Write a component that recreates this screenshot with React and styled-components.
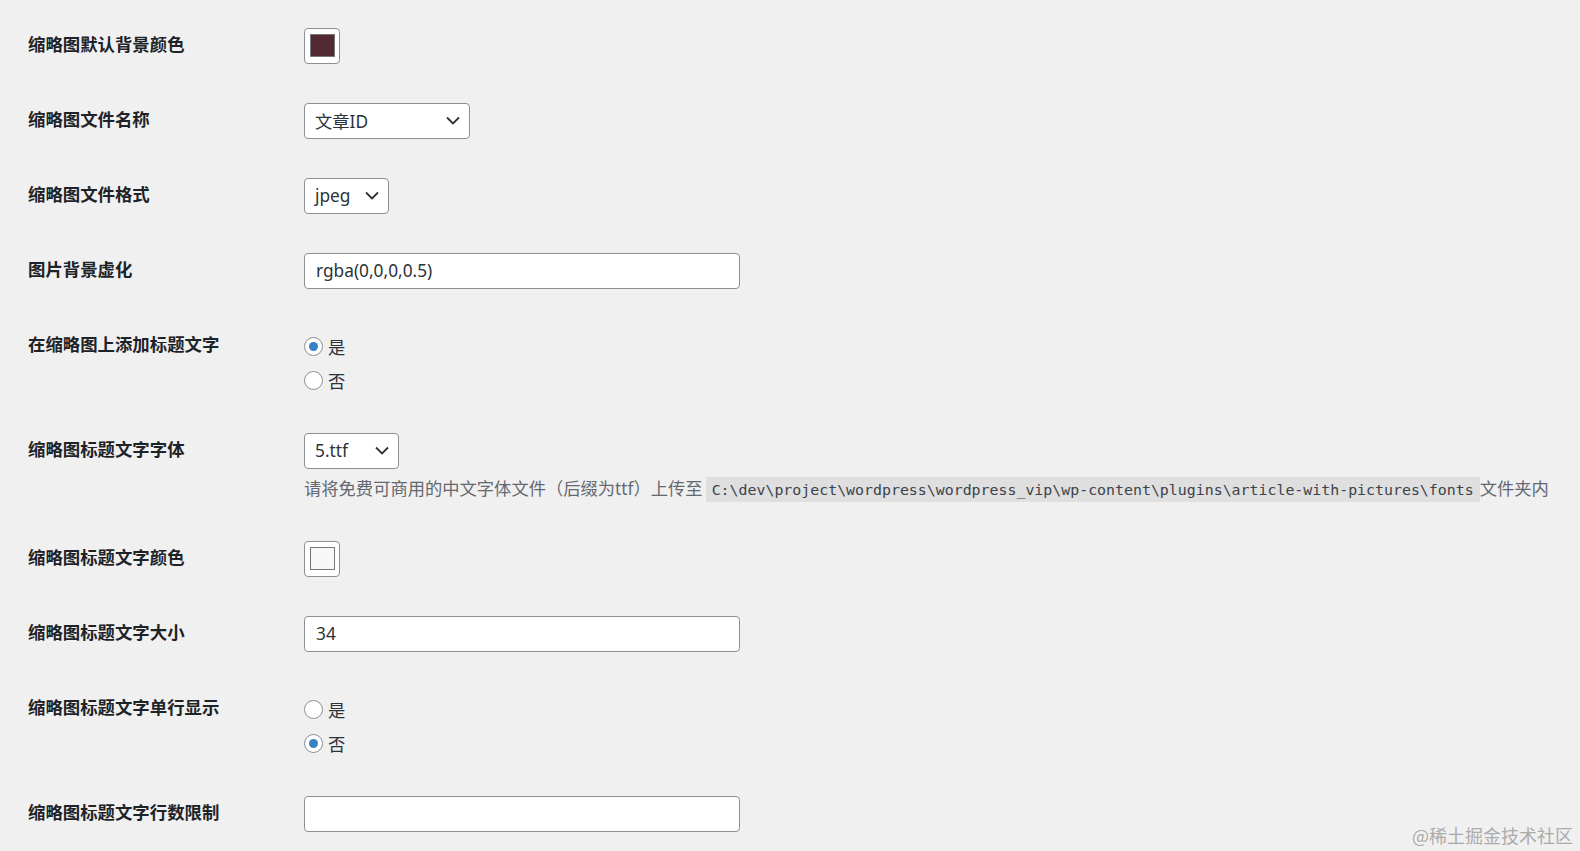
import React from "react";
import styled, { createGlobalStyle } from "styled-components";

const GlobalStyle = createGlobalStyle`
  html, body {
    margin: 0;
    padding: 0;
    background: #f0f0f1;
  }
  body {
    font-family: "Noto Sans", "Noto Sans CJK SC", sans-serif;
    color: #2c3338;
  }
`;

const Page = styled.div`
  position: relative;
  min-height: 100vh;
  box-sizing: border-box;
  padding: 8px 0 0 28px;
  font-size: 17.3px;
`;

const FormTable = styled.div`
  display: flex;
  flex-direction: column;
`;

const Row = styled.div`
  display: flex;
  align-items: flex-start;
`;

const Label = styled.div`
  width: 276px;
  flex-shrink: 0;
  padding-top: 25px;
  font-family: "Noto Sans CJK SC", sans-serif;
  font-weight: 700;
  font-size: 17.4px;
  line-height: 22px;
  color: #1d2327;
`;

const Field = styled.div`
  flex: 1;
  padding: 19.5px 0;
  display: flex;
  flex-direction: column;
  align-items: flex-start;
`;

const ColorButton = styled.div`
  width: 36px;
  height: 36px;
  box-sizing: border-box;
  border: 1px solid #8c8f94;
  border-radius: 4px;
  background: #fff;
  display: flex;
  align-items: center;
  justify-content: center;
`;

const Swatch = styled.div`
  width: 25px;
  height: 23px;
  box-sizing: border-box;
  border: 1px solid #777;
  background: ${(p) => p.color};
`;

const SelectBox = styled.div`
  width: ${(p) => p.width}px;
  height: 36px;
  box-sizing: border-box;
  border: 1px solid #8c8f94;
  border-radius: 4px;
  background: #fff;
  display: flex;
  align-items: center;
  justify-content: space-between;
  padding: 0 9px 0 10px;
  color: #2c3338;
  font-size: 17.3px;
`;

const SelectValue = styled.span`
  font-family: "Noto Sans", "Noto Sans CJK SC", sans-serif;
`;

const TextInput = styled.div`
  width: 436px;
  height: 36px;
  box-sizing: border-box;
  border: 1px solid #8c8f94;
  border-radius: 4px;
  background: #fff;
  display: flex;
  align-items: center;
  padding: 0 11px;
  font-size: 17.3px;
  color: #2c3338;
`;

const RadioList = styled.div`
  display: flex;
  flex-direction: column;
`;

const RadioOption = styled.label`
  display: flex;
  align-items: center;
  height: 22px;
  margin: 8px 0 4px;
  font-family: "Noto Sans CJK SC", sans-serif;
  font-size: 17.3px;
  color: #2c3338;
  &:last-child {
    margin-bottom: 2px;
  }
`;

const RadioCircle = styled.span`
  width: 19px;
  height: 19px;
  box-sizing: border-box;
  border-radius: 50%;
  border: 1px solid #8c8f94;
  background: #fff;
  margin: 0 5px 0 0;
  display: flex;
  align-items: center;
  justify-content: center;
  &::before {
    content: "";
    width: 9px;
    height: 9px;
    border-radius: 50%;
    background: ${(p) => (p.checked ? "#3582c4" : "transparent")};
  }
`;

const Description = styled.p`
  margin: 8px 0 0;
  line-height: 24px;
  font-family: "Noto Sans", "Noto Sans CJK SC", sans-serif;
  font-size: 17.3px;
  color: #646970;
  white-space: nowrap;
`;

const Code = styled.code`
  font-family: "DejaVu Sans Mono", "Liberation Mono", monospace;
  font-size: 14.9px;
  color: #3c434a;
  background: rgba(0, 0, 0, 0.07);
  padding: 4px 6px 3.5px;
  margin: 0 0 0 3px;
`;

const Watermark = styled.div`
  position: absolute;
  right: 7px;
  bottom: 4px;
  line-height: 24px;
  font-family: "Noto Sans CJK SC", sans-serif;
  font-size: 18px;
  color: #ababab;
`;

const Chevron = () => (
  <svg width="14" height="9" viewBox="0 0 14 9" fill="none">
    <path d="M1 1.5 L7 7.5 L13 1.5" stroke="#2c3338" strokeWidth="1.8" />
  </svg>
);

const Select = ({ width, value }) => (
  <SelectBox width={width}>
    <SelectValue>{value}</SelectValue>
    <Chevron />
  </SelectBox>
);

const Radios = ({ checked }) => (
  <RadioList>
    <RadioOption>
      <RadioCircle checked={checked === "yes"} />是
    </RadioOption>
    <RadioOption>
      <RadioCircle checked={checked === "no"} />否
    </RadioOption>
  </RadioList>
);

export default function App() {
  return (
    <>
      <GlobalStyle />
      <Page>
        <FormTable>
          <Row>
            <Label>缩略图默认背景颜色</Label>
            <Field>
              <ColorButton>
                <Swatch color="#512932" />
              </ColorButton>
            </Field>
          </Row>
          <Row>
            <Label>缩略图文件名称</Label>
            <Field>
              <Select width={166} value="文章ID" />
            </Field>
          </Row>
          <Row>
            <Label>缩略图文件格式</Label>
            <Field>
              <Select width={85} value="jpeg" />
            </Field>
          </Row>
          <Row>
            <Label>图片背景虚化</Label>
            <Field>
              <TextInput>rgba(0,0,0,0.5)</TextInput>
            </Field>
          </Row>
          <Row>
            <Label>在缩略图上添加标题文字</Label>
            <Field>
              <Radios checked="yes" />
            </Field>
          </Row>
          <Row>
            <Label>缩略图标题文字字体</Label>
            <Field>
              <Select width={95} value="5.ttf" />
              <Description>
                请将免费可商用的中文字体文件（后缀为ttf）上传至
                <Code>C:\dev\project\wordpress\wordpress_vip\wp-content\plugins\article-with-pictures\fonts</Code>
                文件夹内
              </Description>
            </Field>
          </Row>
          <Row>
            <Label>缩略图标题文字颜色</Label>
            <Field>
              <ColorButton>
                <Swatch color="#f7f7f7" />
              </ColorButton>
            </Field>
          </Row>
          <Row>
            <Label>缩略图标题文字大小</Label>
            <Field>
              <TextInput>34</TextInput>
            </Field>
          </Row>
          <Row>
            <Label>缩略图标题文字单行显示</Label>
            <Field>
              <Radios checked="no" />
            </Field>
          </Row>
          <Row>
            <Label>缩略图标题文字行数限制</Label>
            <Field>
              <TextInput />
            </Field>
          </Row>
        </FormTable>
        <Watermark>@稀土掘金技术社区</Watermark>
      </Page>
    </>
  );
}
